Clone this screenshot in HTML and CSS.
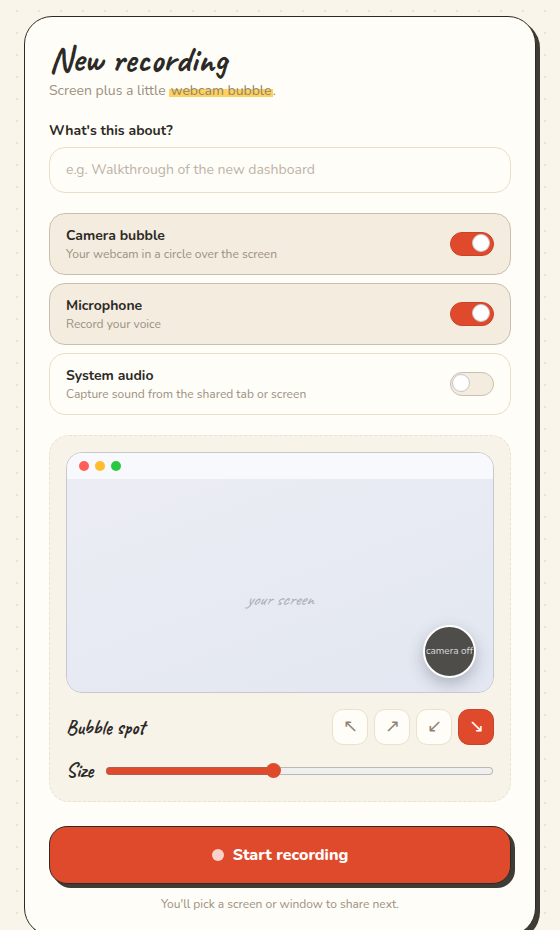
FILE: index.html
```html
<!DOCTYPE html>
<html lang="en">
<head>
<meta charset="utf-8">
<title>New recording</title>
<link rel="stylesheet" href="styles.css">
</head>
<body>
<main class="card">
  <h1 class="title">New recording</h1>
  <p class="sub">Screen plus a little <span class="mark">webcam bubble</span>.</p>
  <label class="label" for="topic">What's this about?</label>
  <input class="input" id="topic" type="text" placeholder="e.g. Walkthrough of the new dashboard">
  <div class="rows">
    <div class="row on">
      <div class="row-text"><div class="row-name">Camera bubble</div><div class="row-desc">Your webcam in a circle over the screen</div></div>
      <span class="toggle on"><span class="knob"></span></span>
    </div>
    <div class="row on">
      <div class="row-text"><div class="row-name">Microphone</div><div class="row-desc">Record your voice</div></div>
      <span class="toggle on"><span class="knob"></span></span>
    </div>
    <div class="row">
      <div class="row-text"><div class="row-name">System audio</div><div class="row-desc">Capture sound from the shared tab or screen</div></div>
      <span class="toggle"><span class="knob"></span></span>
    </div>
  </div>
  <section class="stage">
    <div class="screen">
      <div class="bar"><i class="dot red"></i><i class="dot yellow"></i><i class="dot green"></i></div>
      <div class="canvas"><span class="your">your screen</span></div>
      <div class="bubble">camera off</div>
    </div>
    <div class="spot">
      <span class="hand">Bubble spot</span>
      <div class="spots">
        <button class="sbtn">↖</button>
        <button class="sbtn">↗</button>
        <button class="sbtn">↙</button>
        <button class="sbtn active">↘</button>
      </div>
    </div>
    <div class="size">
      <span class="hand">Size</span>
      <input class="range" type="range" min="0" max="100" step="0.1" value="43.1" aria-label="Size">
    </div>
  </section>
  <button class="start"><i class="rec"></i>Start recording</button>
  <p class="hint">You'll pick a screen or window to share next.</p>
</main>
</body>
</html>
```
FILE: styles.css
```css
* { box-sizing: border-box; }
html, body { margin: 0; height: 930px; overflow: hidden; }
body {
  padding: 16px 24px 0;
  background-color: #f9f5eb;
  background-image: radial-gradient(circle at 11px 11px, #e9e3d0 1.1px, transparent 1.6px);
  background-size: 22px 22px;
  background-position: 6px 0;
  font-family: "Nunito", "Noto Sans", sans-serif;
  color: #2b2a26;
}
.card {
  width: 512px;
  height: 920px;
  padding: 24px 24px 0;
  background: #fffdf8;
  border: 1.5px solid #2b2a26;
  border-radius: 28px;
  box-shadow: 4px 4px 0 #3f3c35;
}
.title {
  margin: 0;
  height: 38px;
  font-family: "Caveat", "DejaVu Sans", cursive;
  font-size: 36px;
  line-height: 36px;
  font-weight: 700;
}
.sub { margin: 2px 0 0; font-size: 14px; line-height: 20px; color: #9b8f80; }
.mark { padding: 0 1.5px; background: linear-gradient(transparent 42%, #ffd15c 42%, #ffd15c 84%, transparent 84%); color: #8f8473; }
.label { display: block; margin-top: 20px; font-size: 14px; line-height: 19px; font-weight: 700; }
.input {
  display: block;
  width: 100%;
  height: 46px;
  margin-top: 7px;
  padding: 0 16px 2px;
  border: 1.5px solid #e9dfc9;
  border-radius: 16px;
  background: #fffdf8;
  font: inherit;
  font-size: 14px;
  outline: none;
}
.input::placeholder { color: #bcb3a6; opacity: 1; }
.rows { display: flex; flex-direction: column; gap: 8px; margin-top: 20px; }
.row {
  display: flex;
  align-items: center;
  justify-content: space-between;
  height: 62px;
  padding: 0 16px;
  border: 1.5px solid #e9dfc9;
  border-radius: 16px;
}
.row.on { background: #f4ecdf; border-color: #c9bfb0; }
.row-name { font-size: 14px; line-height: 19px; font-weight: 700; }
.row-desc { margin-top: 1px; font-size: 12px; line-height: 16px; color: #9b8f80; }
.toggle {
  display: flex;
  align-items: flex-start;
  width: 44px;
  height: 24px;
  padding: 0.5px 0 0 1px;
  border: 1.5px solid #c9bfb0;
  border-radius: 12px;
  background: #f4ecdf;
}
.toggle.on { background: #e04a2c; border-color: #c9432a; }
.toggle.on .knob { transform: translateX(20px); }
.knob {
  flex: none;
  width: 18px;
  height: 18px;
  border: 1.5px solid #c8c6cc;
  border-radius: 50%;
  background: #fff;
}
.stage {
  height: 367px;
  margin-top: 20px;
  padding: 16px;
  background: #f7f3e9;
  border: 1.5px dashed #e9e2cf;
  border-radius: 20px;
}
.screen {
  position: relative;
  display: flex;
  flex-direction: column;
  height: 241px;
  border: 1.5px solid #c8c9cf;
  border-radius: 16px;
  overflow: hidden;
  background: #e8ebf3;
}
.bar {
  display: flex;
  align-items: center;
  gap: 6px;
  height: 26px;
  padding-left: 12px;
  background: #f8f9fc;
}
.dot { width: 10px; height: 10px; border-radius: 50%; }
.red { background: #ff5f57; }
.yellow { background: #febc2e; }
.green { background: #28c840; }
.canvas {
  flex: 1;
  display: flex;
  align-items: center;
  justify-content: center;
  background: linear-gradient(160deg, #ecedf4, #e2e7f1);
}
.your {
  font-family: "Caveat", "DejaVu Sans", cursive;
  font-style: italic;
  font-size: 17.5px;
  color: #a9abb0;
  margin-top: 26px;
}
.bubble {
  position: absolute;
  right: 17px;
  bottom: 14.5px;
  width: 53px;
  height: 53px;
  display: flex;
  align-items: center;
  justify-content: center;
  border: 2.5px solid #fff;
  border-radius: 50%;
  background: #4e4d4a;
  box-shadow: 0 6px 16px rgba(60, 60, 80, .3);
  color: #d9d9d9;
  font-size: 10px;
  white-space: nowrap;
}
.spot {
  display: flex;
  align-items: center;
  justify-content: space-between;
  margin-top: 16px;
}
.hand {
  font-family: "Caveat", "DejaVu Sans", cursive;
  font-size: 20px;
  font-weight: 700;
}
.spots { display: flex; gap: 6px; }
.sbtn {
  display: flex;
  align-items: center;
  justify-content: center;
  width: 36px;
  height: 36px;
  padding: 0 0 2px;
  border: 1.5px solid #ebe1cd;
  border-radius: 11px;
  background: #fffdf8;
  color: #8f8272;
  font: inherit;
  font-size: 18px;
  line-height: 1;
}
.sbtn.active { background: #e04a2c; border-color: #c9432a; color: #fff; }
.size { display: flex; align-items: center; gap: 13px; margin-top: 13px; padding-right: 1px; }
.range {
  flex: 1;
  min-width: 0;
  height: 15px;
  margin: 0;
  background: transparent;
  -webkit-appearance: none;
  appearance: none;
}
.range::-webkit-slider-runnable-track {
  height: 8px;
  border-radius: 4px;
  background: linear-gradient(90deg, #e04a2c 44%, #efefef 44%);
  box-shadow: inset 0 0 0 1px rgba(120, 120, 120, .45);
}
.range::-webkit-slider-thumb {
  -webkit-appearance: none;
  width: 15px;
  height: 15px;
  margin-top: -3.5px;
  border-radius: 50%;
  background: #e04a2c;
}
.start {
  display: flex;
  align-items: center;
  justify-content: center;
  gap: 9px;
  width: 100%;
  height: 58px;
  margin-top: 24px;
  border: 1.5px solid #2b2a26;
  border-radius: 18px;
  background: #e04a2c;
  box-shadow: 4px 4px 0 #3f3c35;
  color: #fff;
  font: inherit;
  font-size: 16px;
  font-weight: 800;
}
.rec { width: 12px; height: 12px; border-radius: 50%; background: #f9d2ca; }
.hint { margin: 12px 0 0; text-align: center; font-size: 12px; line-height: 16px; color: #9b8f80; }
```
